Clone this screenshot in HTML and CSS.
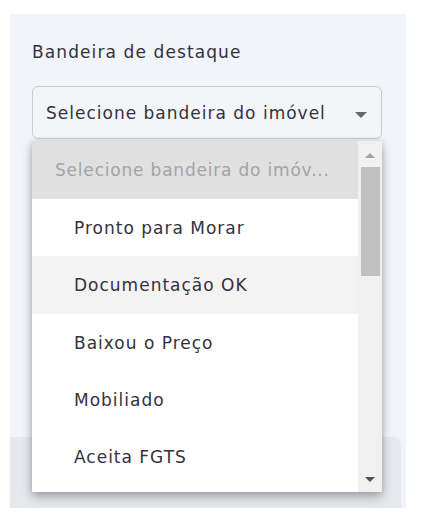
FILE: index.html
```html
<!DOCTYPE html>
<html lang="pt-BR">
<head>
<meta charset="utf-8">
<title>Bandeira de destaque</title>
<link rel="stylesheet" href="styles.css">
</head>
<body>
<div class="panel">
  <div class="field">
    <label class="label">Bandeira de destaque</label>
    <div class="select">
      <span class="select-text">Selecione bandeira do imóvel</span>
      <span class="caret"></span>
    </div>
  </div>
  <div class="footer-box"></div>
  <div class="dropdown">
    <ul class="options">
      <li class="option placeholder">Selecione bandeira do imóv...</li>
      <li class="option">Pronto para Morar</li>
      <li class="option hover">Documentação OK</li>
      <li class="option">Baixou o Preço</li>
      <li class="option">Mobiliado</li>
      <li class="option">Aceita FGTS</li>
    </ul>
    <div class="scrollbar">
      <span class="arrow up"></span>
      <div class="track"><div class="thumb"></div></div>
      <span class="arrow down"></span>
    </div>
  </div>
</div>
</body>
</html>
```
FILE: styles.css
```css
* { box-sizing: border-box; }
body {
  margin: 0;
  background: #ffffff;
  font-family: "DejaVu Sans", "Noto Sans", sans-serif;
  color: #33323d;
}
.panel {
  position: relative;
  margin: 14px 0 0 10px;
  width: 396px;
  height: 494px;
  background: #f1f4f8;
  display: flex;
  flex-direction: column;
}
.field {
  padding: 27px 0 0 22px;
  display: flex;
  flex-direction: column;
}
.label {
  font-size: 17px;
  letter-spacing: 1.1px;
  line-height: 22px;
  height: 22px;
}
.select {
  margin-top: 23px;
  width: 350px;
  height: 53px;
  border: 1px solid #c8cbd0;
  border-radius: 6px;
  background: #f3f5f8;
  display: flex;
  align-items: center;
  padding: 0 14px 0 13px;
  font-size: 17px;
  letter-spacing: 1px;
}
.select-text { flex: 1; white-space: nowrap; }
.caret {
  width: 0; height: 0;
  border-left: 6px solid transparent;
  border-right: 6px solid transparent;
  border-top: 6px solid #666;
  margin-top: 4px;
}
.footer-box {
  margin-top: 298px;
  width: 391px;
  height: 71px;
  background: #e5e8ec;
  border-top-right-radius: 8px;
}
.dropdown {
  position: absolute;
  left: 22px;
  top: 127px;
  width: 350px;
  height: 351px;
  background: #fff;
  box-shadow: 0 5px 10px rgba(0,0,0,0.28), 0 0 6px rgba(0,0,0,0.12);
  display: flex;
  overflow: hidden;
}
.options {
  list-style: none;
  margin: 0;
  padding: 0;
  flex: 1;
  min-width: 0;
}
.option {
  height: 57px;
  display: flex;
  align-items: center;
  padding-left: 42px;
  font-size: 17px;
  letter-spacing: 1px;
  color: #33323d;
  white-space: nowrap;
}
.option.placeholder {
  height: 58px;
  padding-left: 23px;
  background: #e0e0e0;
  color: #a4a4a4;
  letter-spacing: 0.8px;
}
.option.hover { background: #f3f3f3; height: 58px; }
.scrollbar {
  width: 24px;
  flex: none;
  background: #f1f1f1;
  display: flex;
  flex-direction: column;
  align-items: center;
  padding: 0 2px;
}
.arrow {
  width: 0; height: 0;
  border-left: 5px solid transparent;
  border-right: 5px solid transparent;
}
.arrow.up {
  border-bottom: 5px solid #a3a3a3;
  margin: 12px 0 9px;
}
.arrow.down {
  border-top: 5px solid #505050;
  margin: 0 0 10px;
}
.track { flex: 1; width: 100%; }
.thumb {
  height: 109px;
  background: #c1c1c1;
  width: 19px;
  margin: 0 auto;
}
```
